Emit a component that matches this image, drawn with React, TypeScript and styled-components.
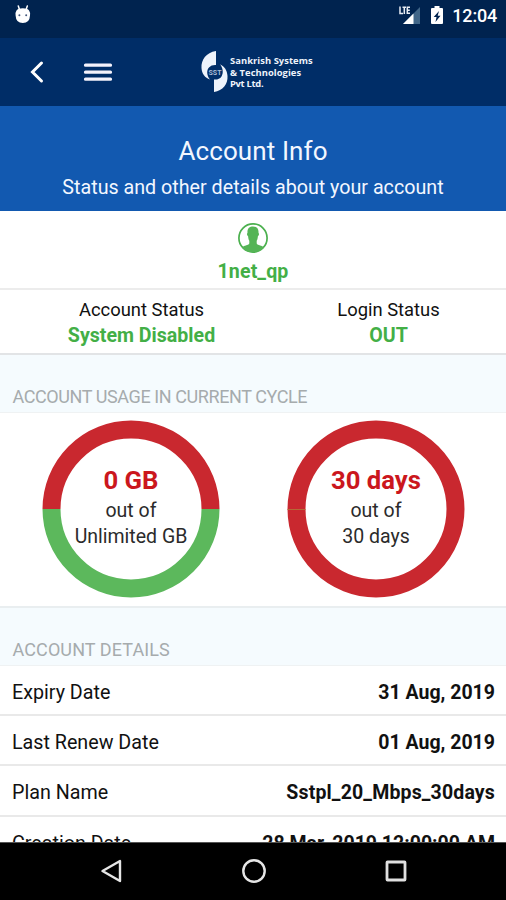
import React from "react";
import styled, { createGlobalStyle } from "styled-components";

const GlobalStyle = createGlobalStyle`
  * { box-sizing: border-box; }
  body { margin: 0; background: #000; font-family: Roboto, sans-serif; }
  svg { display: block; flex: none; }
`;

const Screen = styled.div`
  width: 506px;
  height: 900px;
  display: flex;
  flex-direction: column;
  overflow: hidden;
  background: #fff;
  color: #111;
`;

const StatusBar = styled.header`
  height: 38px;
  flex: none;
  display: flex;
  align-items: flex-start;
  padding: 4px 9px 0 14px;
  background: #00234f;
  color: #fff;
`;

const StatusIcons = styled.div`
  display: flex;
  gap: 9px;
  margin-left: auto;
`;

const Clock = styled.time`
  margin-left: 8px;
  font-size: 18px;
  font-weight: 500;
  line-height: 24px;
  letter-spacing: -0.2px;
`;

const Toolbar = styled.nav`
  height: 68px;
  flex: none;
  display: flex;
  align-items: flex-start;
  background: #002d67;
  padding: 13px 0 0 29px;
`;

const IconButton = styled.button<{ $gap?: number }>`
  border: 0;
  padding: 0;
  margin: 9px 0 0 ${(p) => p.$gap ?? 0}px;
  background: none;
`;

const Brand = styled.div`
  display: flex;
  margin-left: 88px;
  color: #eef3fb;
`;

const BrandName = styled.div`
  margin: 4px 0 0 1px;
  font: 700 9.4px/11.7px "Open Sans", sans-serif;
  white-space: nowrap;
`;

const BrandLine = styled.div<{ $spacing: number }>`
  letter-spacing: ${(p) => p.$spacing}px;
`;

const Hero = styled.section`
  height: 105px;
  flex: none;
  padding-top: 28px;
  background: #1259b0;
  color: #f3f7ff;
  text-align: center;
`;

const HeroTitle = styled.h1`
  margin: 0;
  font-size: 26px;
  font-weight: 400;
  line-height: 34px;
  letter-spacing: 0.1px;
`;

const HeroText = styled.p`
  margin: 7px 0 0;
  font-size: 19.7px;
  line-height: 26px;
`;

const User = styled.section`
  height: 79px;
  flex: none;
  display: flex;
  flex-direction: column;
  align-items: center;
  padding-top: 11px;
  border-bottom: 2px solid #ececec;
`;

const Highlight = styled.strong`
  display: block;
  color: #43af46;
  font-size: 19.6px;
  font-weight: 700;
  line-height: 26px;
`;

const UserName = styled(Highlight)`
  margin-top: 5px;
  letter-spacing: 0.1px;
`;

const Statuses = styled.section`
  height: 65px;
  flex: none;
  display: grid;
  grid-template-columns: 283px 211px;
  padding-top: 7px;
  border-bottom: 2px solid #e2e4e6;
  text-align: center;
`;

const StatusLabel = styled.div`
  font-size: 18.4px;
  line-height: 26px;
`;

const SectionTitle = styled.h2<{ $spacing: number }>`
  height: 58px;
  flex: none;
  margin: 0;
  padding: 29px 12.5px 0;
  background: #f5fbfe;
  border-bottom: 1px solid #eff2f3;
  color: #a6abad;
  font-size: 18px;
  font-weight: 400;
  line-height: 25px;
  letter-spacing: ${(p) => p.$spacing}px;
`;

const Usage = styled.section`
  height: 195px;
  flex: none;
  display: flex;
  gap: 67px;
  padding: 7px 0 0 42px;
  border-bottom: 2px solid #e9eef0;
`;

const Gauge = styled.div`
  display: grid;
  width: 178px;
  height: 178px;
  > * { grid-area: 1 / 1; }
`;

const GaugeText = styled.div`
  padding-top: 44px;
  color: #2b2b2b;
  font-size: 19.5px;
  line-height: 26px;
  text-align: center;
`;

const GaugeValue = styled.div`
  margin-bottom: 2px;
  color: #cb171d;
  font-size: 25.7px;
  font-weight: 700;
  line-height: 32px;
`;

const Details = styled.dl`
  flex: 1;
  min-height: 0;
  margin: 0;
  overflow: hidden;
`;

const Row = styled.div`
  height: 50.2px;
  display: flex;
  justify-content: space-between;
  padding: 14px 11px 0 12px;
  border-bottom: 2px solid #e9e9e9;
  font-size: 19.7px;
  line-height: 26px;
`;

const Term = styled.dt``;

const Value = styled.dd<{ $spacing: number }>`
  margin: 0;
  font-size: 19.5px;
  font-weight: 700;
  letter-spacing: ${(p) => p.$spacing}px;
`;

const NavBar = styled.footer`
  height: 58px;
  flex: none;
  display: flex;
  justify-content: space-between;
  padding: 15px 98px 0 100px;
  background: #000;
  border-top: 1px solid #555;
`;

const RobotIcon = () => (
  <svg width="18" height="20" viewBox="0 0 18 20">
    <path d="M4.300 2l1 3M13.300 2l-1 3" stroke="#fff" strokeWidth="1.500" strokeLinecap="round" />
    <path d="M2.500 6.500Q4 4.300 8.800 4.300t6.300 2.200q1.200 1.500.9 5-.3 7.500-7.200 7.500T1.600 11.500q-.3-3.500.9-5z" fill="#fff" />
    <circle cx="5.400" cy="11.200" r="1" fill="#44577c" />
    <circle cx="12.200" cy="11.200" r="1" fill="#44577c" />
  </svg>
);

const SignalIcon = () => (
  <svg width="24" height="22" viewBox="0 0 24 22">
    <path d="M23 3v17H6z" fill="#416688" />
    <path d="M16.500 9.500V20H6z" fill="#fff" />
    <path d="M3 2.500V9.500h3M5.500 3.200H9M7.300 3v7M13 3.200h-2.700V9.300H13M10.300 6.200h2.500" stroke="#e8edf5" strokeWidth="1.500" fill="none" />
  </svg>
);

const BatteryIcon = () => (
  <svg width="14" height="22" viewBox="0 0 14 22">
    <path d="M4.500 2h5v2H12q1 0 1 1v14q0 1-1 1H2q-1 0-1-1V5q0-1 1-1h2.500z" fill="#fff" />
    <path d="M9 7l-5.300 6h2.800l-1 5 5-6.300H7.700z" fill="#00234f" />
  </svg>
);

const LogoMark = () => (
  <svg width="28" height="42" viewBox="0 0 28 42">
    <path d="M15 0C5 1.500 0 9 .5 17c.3 5.500 3.500 10 8.500 11.500C5.500 24.500 5.500 19 8 16.500c1.800-2 4-2.700 7-2.500z" fill="#eef3fb" />
    <path d="M13 41c9-1.300 14-8 13.500-16-.3-5.500-3-9.500-7.500-11.700 3.200 4.300 3.500 8.700 1.500 12.200-1.700 2.500-4.300 3.300-7.500 3z" fill="#eef3fb" />
    <text x="14" y="24" textAnchor="middle" fill="#aabbd6" fontFamily="Roboto, sans-serif" fontSize="7" fontWeight="700">SST</text>
  </svg>
);

const UserIcon = () => (
  <svg width="32" height="32" viewBox="0 0 32 32">
    <circle cx="16" cy="16" r="14.100" fill="none" stroke="#4bb04e" strokeWidth="1.700" />
    <path d="M10.500 11c-.4-4.500 2-6.500 5.500-6.500s5.900 2 5.500 6.500c1 .5.500 2.700-.6 3.200-.2 2.300-.5 3.500-1.200 4.500v2.800c1 2 5.500 1.700 7.300 4A14.200 14.200 0 0 1 16 30.200 14.200 14.200 0 0 1 5 25.500c1.800-2.300 6.300-2 7.300-4v-2.800c-.7-1-1-2.200-1.200-4.500-1.100-.5-1.600-2.700-.6-3.200z" fill="#55b456" />
  </svg>
);

const HalfRing = () => (
  <svg width="178" height="178" viewBox="0 0 178 178">
    <path d="M9.500 89a79.500 79.500 0 0 1 159 0" fill="none" stroke="#c9282f" strokeWidth="18" />
    <path d="M9.500 89a79.500 79.500 0 0 0 159 0" fill="none" stroke="#5cb85c" strokeWidth="18" />
  </svg>
);

const FullRing = () => (
  <svg width="178" height="178" viewBox="0 0 178 178">
    <circle cx="89" cy="89" r="79.500" fill="none" stroke="#c9282f" strokeWidth="18" />
    <path d="M.5 89.500h18" stroke="#b56a36" />
  </svg>
);

const rows = [
  { label: "Expiry Date", value: "31 Aug, 2019", spacing: 0 },
  { label: "Last Renew Date", value: "01 Aug, 2019", spacing: 0 },
  { label: "Plan Name", value: "Sstpl_20_Mbps_30days", spacing: 0.15 },
  { label: "Creation Date", value: "28 Mar, 2019 12:00:00 AM", spacing: 0 },
];

export default function App() {
  return (
    <Screen>
      <GlobalStyle />
      <StatusBar>
        <RobotIcon />
        <StatusIcons>
          <SignalIcon />
          <BatteryIcon />
        </StatusIcons>
        <Clock>12:04</Clock>
      </StatusBar>
      <Toolbar>
        <IconButton aria-label="Back">
          <svg width="16" height="24" viewBox="0 0 16 24">
            <path d="M12.500 3L3.500 12l9 9" fill="none" stroke="#fff" strokeWidth="3" strokeLinecap="round" />
          </svg>
        </IconButton>
        <IconButton $gap={38} aria-label="Menu">
          <svg width="30" height="24" viewBox="0 0 30 24">
            <path d="M2.500 5.200h25M2.500 12.200h25M2.500 19.200h25" stroke="#f4f2fc" strokeWidth="3.200" strokeLinecap="round" />
          </svg>
        </IconButton>
        <Brand>
          <LogoMark />
          <BrandName>
            <BrandLine $spacing={0.05}>Sankrish Systems</BrandLine>
            <BrandLine $spacing={0.05}>&amp; Technologies</BrandLine>
            <BrandLine $spacing={-0.3}>Pvt Ltd.</BrandLine>
          </BrandName>
        </Brand>
      </Toolbar>
      <Hero>
        <HeroTitle>Account Info</HeroTitle>
        <HeroText>Status and other details about your account</HeroText>
      </Hero>
      <User>
        <UserIcon />
        <UserName>1net_qp</UserName>
      </User>
      <Statuses>
        <div>
          <StatusLabel>Account Status</StatusLabel>
          <Highlight>System Disabled</Highlight>
        </div>
        <div>
          <StatusLabel>Login Status</StatusLabel>
          <Highlight>OUT</Highlight>
        </div>
      </Statuses>
      <SectionTitle $spacing={-0.41}>ACCOUNT USAGE IN CURRENT CYCLE</SectionTitle>
      <Usage>
        <Gauge>
          <HalfRing />
          <GaugeText>
            <GaugeValue>0 GB</GaugeValue>
            <div>out of</div>
            <div>Unlimited GB</div>
          </GaugeText>
        </Gauge>
        <Gauge>
          <FullRing />
          <GaugeText>
            <GaugeValue>30 days</GaugeValue>
            <div>out of</div>
            <div>30 days</div>
          </GaugeText>
        </Gauge>
      </Usage>
      <SectionTitle $spacing={0.1}>ACCOUNT DETAILS</SectionTitle>
      <Details>
        {rows.map(({ label, value, spacing }) => (
          <Row key={label}>
            <Term>{label}</Term>
            <Value $spacing={spacing}>{value}</Value>
          </Row>
        ))}
      </Details>
      <NavBar>
        <svg width="24" height="26" viewBox="0 0 24 26">
          <path d="M20 3v20L2.500 13z" fill="none" stroke="#e6e6e6" strokeWidth="2.400" strokeLinejoin="round" />
        </svg>
        <svg width="26" height="26" viewBox="0 0 26 26">
          <circle cx="13" cy="13" r="10.700" fill="none" stroke="#e6e6e6" strokeWidth="2.400" />
        </svg>
        <svg width="24" height="26" viewBox="0 0 24 26">
          <rect x="3" y="4" width="18" height="18" rx="0.500" fill="none" stroke="#e0e0e0" strokeWidth="2.800" />
        </svg>
      </NavBar>
    </Screen>
  );
}
